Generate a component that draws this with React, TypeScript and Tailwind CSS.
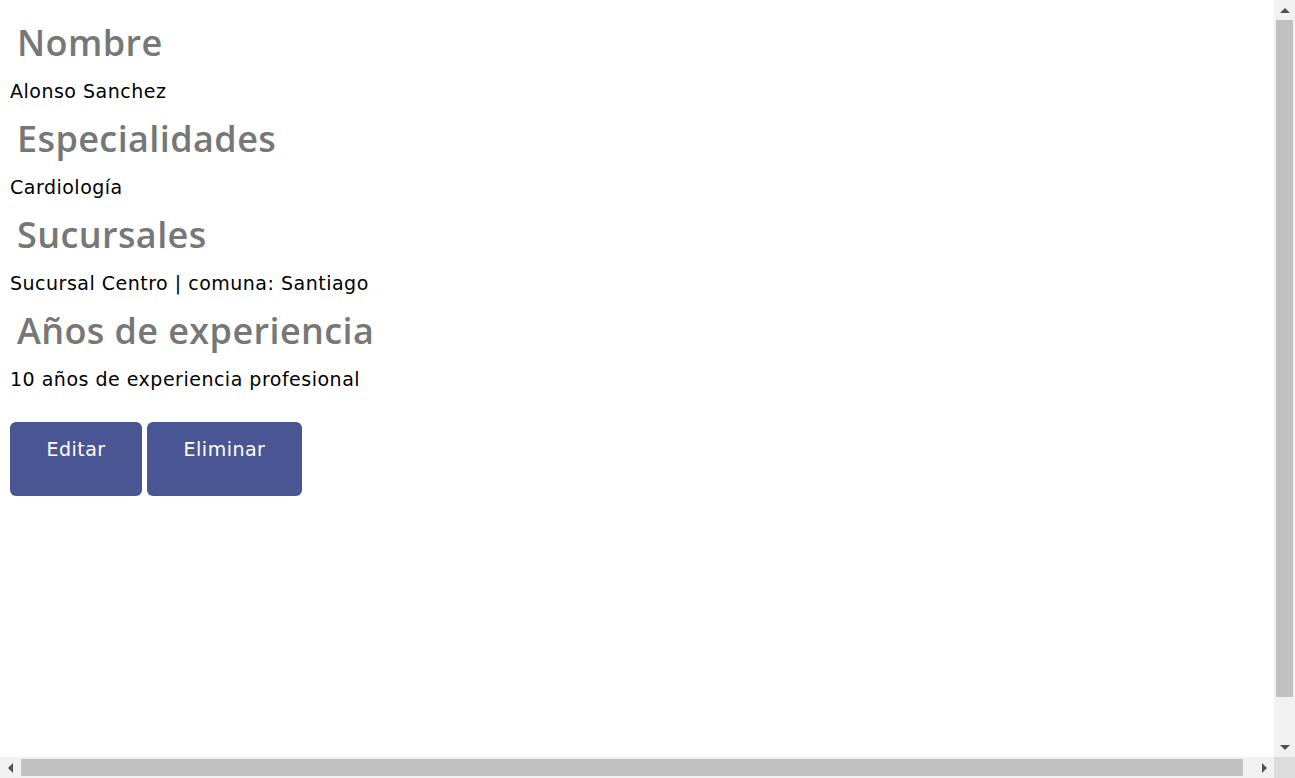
import React from 'react'

const sections = [
  { title: 'Nombre', value: 'Alonso Sanchez' },
  { title: 'Especialidades', value: 'Cardiología' },
  { title: 'Sucursales', value: 'Sucursal Centro | comuna: Santiago' },
  { title: 'Años de experiencia', value: '10 años de experiencia profesional' },
]

function Arrow({ dir }: { dir: 'up' | 'down' | 'left' | 'right' }) {
  const pts = {
    up: '0,6 5,1 10,6',
    down: '0,1 10,1 5,6',
    left: '6,0 6,10 1,5',
    right: '1,0 1,10 6,5',
  }[dir]
  const vertical = dir === 'up' || dir === 'down'
  return (
    <svg width={vertical ? 10 : 7} height={vertical ? 7 : 10} viewBox={vertical ? '0 0 10 7' : '0 0 7 10'}>
      <polygon points={pts} fill="#505050" />
    </svg>
  )
}

// fake browser scrollbars, the page overflows a little in both directions
function Scrollbars() {
  return (
    <>
      <div className="fixed top-0 right-0 w-[21px] h-[757px] bg-[#f1f1f1] flex flex-col items-center">
        <div className="h-[20px] flex items-center justify-center"><Arrow dir="up" /></div>
        <div className="w-[17px] h-[677px] bg-[#c1c1c1]" />
        <div className="mt-auto h-[20px] flex items-center justify-center"><Arrow dir="down" /></div>
      </div>
      <div className="fixed bottom-0 left-0 w-[1274px] h-[21px] bg-[#f1f1f1] flex items-center">
        <div className="w-[21px] flex items-center justify-center"><Arrow dir="left" /></div>
        <div className="w-[1222px] h-[17px] bg-[#c1c1c1]" />
        <div className="ml-auto w-[20px] flex items-center justify-center"><Arrow dir="right" /></div>
      </div>
      <div className="fixed bottom-0 right-0 w-[21px] h-[21px] bg-[#dcdcdc]" />
    </>
  )
}

export default function App() {
  return (
    <div
      className="w-full min-h-screen bg-white px-[10px] pt-[20px]"
      style={{ fontFamily: '"DejaVu Sans", "Noto Sans", sans-serif' }}
    >
      {sections.map(s => (
        <div key={s.title}>
          <h2 className="ml-[7px] font-['Open_Sans',sans-serif] text-[36px] leading-[46px] font-semibold text-[#777777] tracking-[0.4px]">
            {s.title}
          </h2>
          <p className="text-[19px] leading-[50px] text-black tracking-[0.5px]">{s.value}</p>
        </div>
      ))}

      <div className="flex gap-[5px] mt-[18px]">
        <button className="w-[132px] h-[74px] rounded-[6px] bg-[#4a5694] text-white text-[19px] tracking-[0.5px] pt-[13px] flex justify-center items-start">
          Editar
        </button>
        <button className="w-[155px] h-[74px] rounded-[6px] bg-[#4a5694] text-white text-[19px] tracking-[0.5px] pt-[13px] flex justify-center items-start">
          Eliminar
        </button>
      </div>

      <Scrollbars />
    </div>
  )
}
